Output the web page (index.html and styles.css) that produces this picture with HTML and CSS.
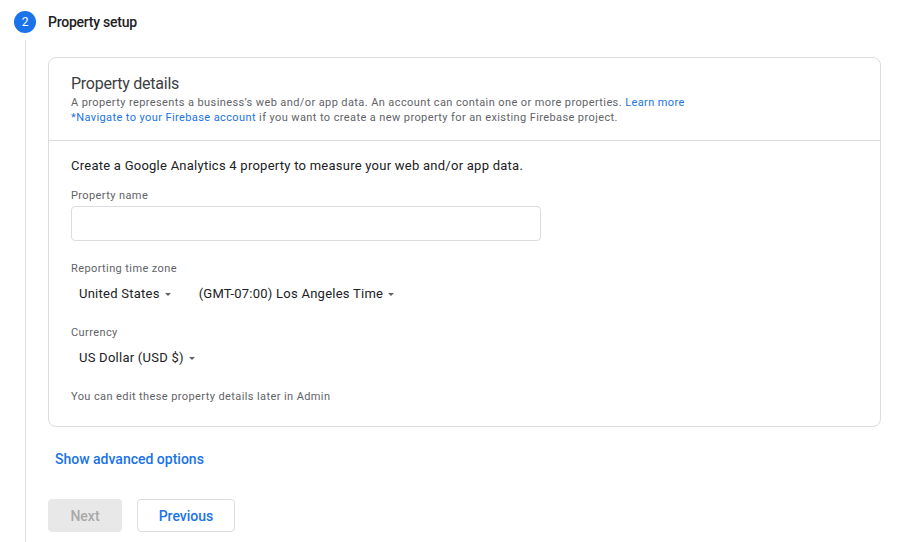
FILE: index.html
```html
<!DOCTYPE html>
<html>
<head>
<meta charset="utf-8">
<link rel="stylesheet" href="styles.css">
</head>
<body>
<div class="step">
  <div class="step-header">
    <span class="step-num">2</span>
    <span class="step-title">Property setup</span>
  </div>
  <div class="step-body">
    <div class="card">
      <div class="card-head">
        <div class="card-title">Property details</div>
        <div class="card-desc">A property represents a business’s web and/or app data. An account can contain one or more properties. <a class="link">Learn more</a></div>
        <div class="card-desc"><a class="link">*Navigate to your Firebase account</a> if you want to create a new property for an existing Firebase project.</div>
      </div>
      <div class="card-content">
        <div class="intro">Create a Google Analytics 4 property to measure your web and/or app data.</div>
        <div class="label label-first">Property name</div>
        <div class="input"></div>
        <div class="label">Reporting time zone</div>
        <div class="selects">
          <div class="select">United States <span class="caret"></span></div>
          <div class="select">(GMT-07:00) Los Angeles Time <span class="caret"></span></div>
        </div>
        <div class="label">Currency</div>
        <div class="selects">
          <div class="select">US Dollar (USD $) <span class="caret"></span></div>
        </div>
        <div class="note">You can edit these property details later in Admin</div>
      </div>
    </div>
    <div class="advanced">Show advanced options</div>
    <div class="buttons">
      <div class="btn btn-disabled">Next</div>
      <div class="btn btn-outline">Previous</div>
    </div>
  </div>
</div>
</body>
</html>
```
FILE: styles.css
```css
* { box-sizing: border-box; }
html, body { margin: 0; background: #fff; }
body {
  font-family: Roboto, "Liberation Sans", sans-serif;
  color: #202124;
  height: 542px;
  overflow: hidden;
}
.step-header {
  display: flex;
  align-items: center;
  padding: 11px 0 0 14px;
  height: 33px;
}
.step-num {
  width: 22px;
  height: 22px;
  border-radius: 50%;
  background: #1a73e8;
  color: #fff;
  font-size: 12px;
  display: flex;
  align-items: center;
  justify-content: center;
}
.step-title {
  margin-left: 12px;
  font-size: 14px;
  font-weight: 500;
  color: #202124;
  letter-spacing: -0.25px;
}
.step-body {
  margin-left: 25px;
  margin-top: 7px;
  border-left: 1px solid #dadce0;
  padding: 17px 19px 20px 22px;
  min-height: 520px;
}
.card {
  border: 1px solid #dadce0;
  border-radius: 8px;
}
.card-head {
  padding: 16px 22px 15px 22px;
  border-bottom: 1px solid #dadce0;
}
.card-title {
  font-size: 16px;
  line-height: 20px;
  color: #3c4043;
  margin-bottom: 1px;
  letter-spacing: -0.25px;
}
.card-desc {
  font-size: 11px;
  line-height: 15px;
  color: #5f6368;
  letter-spacing: 0.4px;
}
.link { color: #1a73e8; }
.card-content {
  padding: 16px 22px 22px 22px;
}
.intro {
  font-size: 13px;
  line-height: 18px;
  color: #202124;
  letter-spacing: 0.25px;
}
.label {
  font-size: 11px;
  line-height: 14px;
  color: #5f6368;
  margin-top: 21px;
  letter-spacing: 0.4px;
}
.label-first { margin-top: 14px; }
.input {
  width: 470px;
  height: 35px;
  margin-top: 3px;
  border: 1px solid #dadce0;
  border-radius: 4px;
}
.selects {
  display: flex;
  gap: 20px;
  margin-top: 9px;
}
.select {
  display: flex;
  align-items: center;
  padding-left: 8px;
  font-size: 13px;
  line-height: 18px;
  color: #202124;
  letter-spacing: 0.25px;
}
.caret {
  margin-left: 5px;
  width: 0;
  height: 0;
  border-left: 3.5px solid transparent;
  border-right: 3.5px solid transparent;
  border-top: 3.5px solid #5f6368;
}
.selects + .label { margin-top: 23px; }
.note {
  margin-top: 23px;
  font-size: 11px;
  line-height: 14px;
  color: #5f6368;
  letter-spacing: 0.4px;
}
.advanced {
  margin-top: 23px;
  padding-left: 7px;
  font-size: 14px;
  line-height: 18px;
  font-weight: 500;
  color: #1a73e8;
}
.buttons {
  display: flex;
  gap: 15px;
  margin-top: 31px;
}
.btn {
  height: 33px;
  border-radius: 4px;
  display: flex;
  align-items: center;
  justify-content: center;
  font-size: 14px;
  font-weight: 500;
}
.btn-disabled {
  width: 74px;
  background: #e8e8e8;
  color: #a8a8a8;
}
.btn-outline {
  width: 98px;
  border: 1px solid #dadce0;
  color: #1a73e8;
}
```
